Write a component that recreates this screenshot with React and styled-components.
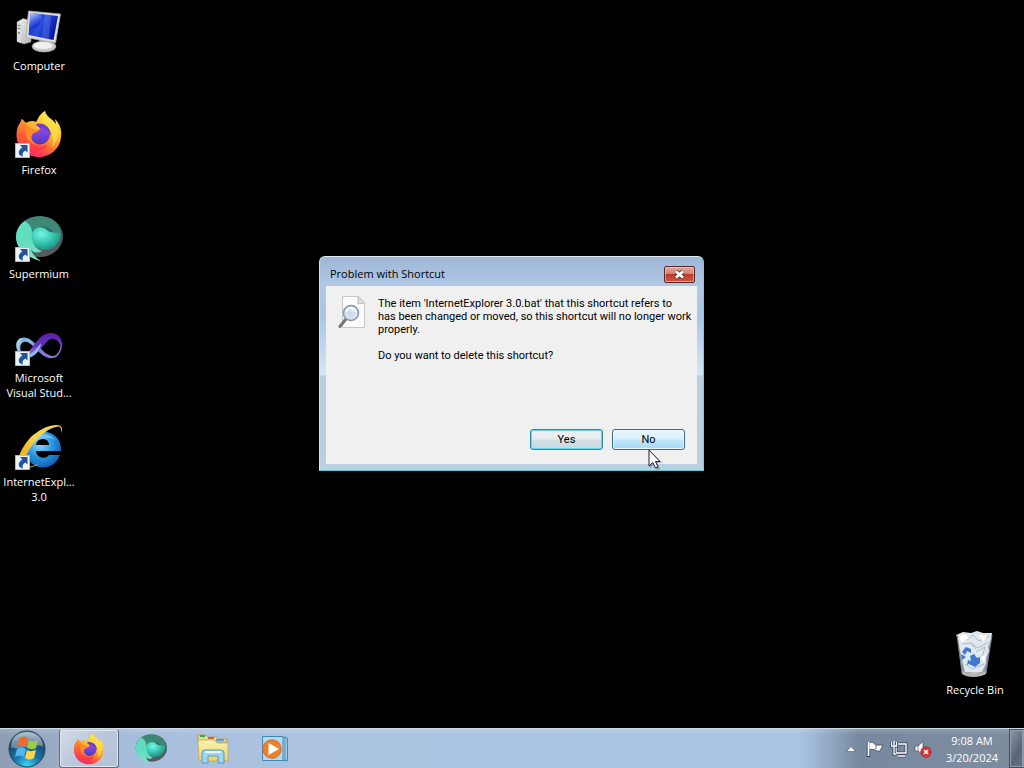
import React from 'react';
import styled, { createGlobalStyle } from 'styled-components';

const GlobalStyle = createGlobalStyle`
  * { box-sizing: border-box; }
  body { margin: 0; background: #000; font-family: "Open Sans", "Noto Sans", sans-serif; font-size: 11px; }
  button { font: inherit; padding: 0; cursor: default; }
  svg { display: block; flex: none; }
`;

const Screen = styled.div`
  min-height: 100vh;
  display: flex;
  flex-direction: column;
  background: #000;
`;

const Desktop = styled.main`
  position: relative;
  flex: 1;
  display: flex;
  justify-content: space-between;
`;

const IconColumn = styled.nav`
  display: flex;
  flex-direction: column;
  justify-content: ${(p) => (p.$end ? 'flex-end' : 'flex-start')};
  padding: ${(p) => (p.$end ? '0 10px 22px 0' : '0')};
`;

const Shortcut = styled.button`
  width: 78px;
  height: ${(p) => (p.$short ? '82px' : '104px')};
  padding-top: 6px;
  display: flex;
  flex-direction: column;
  align-items: center;
  gap: 4px;
  border: 0;
  background: none;
  color: #fff;
  line-height: 15px;
  text-align: center;
  text-shadow: 0 1px 2px #000;
`;

const IconBox = styled.span`
  position: relative;
  display: block;
  width: 48px;
  height: 48px;
`;

const Badge = styled.span`
  position: absolute;
  left: 0;
  bottom: 0;
`;

const Label = styled.span`
  white-space: pre-line;
`;

const DialogLayer = styled.div`
  position: absolute;
  inset: 0 1px 1px 0;
  display: flex;
  align-items: center;
  justify-content: center;
  pointer-events: none;
`;

const Dialog = styled.section`
  pointer-events: auto;
  width: 385px;
  display: flex;
  flex-direction: column;
  padding: 0 6px 6px;
  border: 1px solid;
  border-color: #dfe9f4 #66d3ee #52cbe3 #cfe4f2;
  border-radius: 6px 6px 0 0;
  background: linear-gradient(#9fb6d8 0, #b0c8e4 28px, #a9c6e6 60px, #d3e6f4 118px, #b5cee3 119px, #b9d0e0 100%);
  color: #000;
`;

const TitleBar = styled.header`
  height: 29px;
  display: flex;
  align-items: center;
  justify-content: space-between;
  padding: 5px 2px 0 4px;
`;

const Title = styled.h1`
  margin: 0;
  font-size: 11px;
  font-weight: 400;
  line-height: 16px;
`;

const CloseButton = styled.button`
  width: 31px;
  height: 17px;
  display: flex;
  align-items: center;
  justify-content: center;
  border: 1px solid #59242a;
  border-radius: 2px;
  background: linear-gradient(#e3a699 0, #d58275 45%, #bd3a2c 50%, #cc5846 100%);
  box-shadow: inset 0 0 0 1px rgba(255, 215, 205, 0.5);
`;

const DialogBody = styled.div`
  min-height: 178px;
  display: flex;
  flex-direction: column;
  justify-content: space-between;
  padding: 9px 12px 14px;
  background: #f0f0f0;
  font-family: Roboto, "Liberation Sans", sans-serif;
  font-size: 11px;
  line-height: 13px;
`;

const Message = styled.div`
  display: flex;
  gap: 12px;
`;

const MessageText = styled.div`
  padding-top: 2px;
  p { margin: 0 0 13px; white-space: pre; }
`;

const Actions = styled.div`
  display: flex;
  justify-content: flex-end;
  gap: 9px;
`;

const ActionButton = styled.button`
  width: 73px;
  height: 21px;
  border: 1px solid ${(p) => (p.$hot ? '#3c6f8f' : '#2b8aa4')};
  border-radius: 3px;
  color: #000;
  background: ${(p) =>
    p.$hot
      ? 'linear-gradient(#eaf6fd 0, #d9f0fc 48%, #bee6fd 52%, #a7d9f5 100%)'
      : 'linear-gradient(#f0f2f3 0, #e6ebee 48%, #d5dfe5 52%, #c8dae2 100%)'};
  box-shadow: inset 0 0 0 1px ${(p) => (p.$hot ? '#e4f5fc' : '#62d7ef')};
`;

const Pointer = styled.span`
  position: absolute;
  left: calc(50% + 136px);
  top: calc(50% + 85px);
`;

const Taskbar = styled.footer`
  height: 40px;
  display: flex;
  align-items: stretch;
  border-top: 1px solid #ccd9e8;
  background:
    linear-gradient(rgba(255, 255, 255, 0.16), rgba(255, 255, 255, 0) 6px),
    linear-gradient(90deg, #8e9db3 0, #9cadc6 60px, #a7bddb 130px, #abc3e1 300px, #a9c3e4 calc(100% - 224px), #92a9c6 calc(100% - 195px), #78899f calc(100% - 165px), #7e8c9f 100%);
`;

const StartButton = styled.button`
  width: 54px;
  margin-right: 5px;
  border: 0;
  background: none;
  display: flex;
  align-items: center;
  justify-content: center;
`;

const TaskList = styled.nav`
  display: flex;
  gap: 2px;
  flex: 1;
`;

const TaskButton = styled.button`
  width: 60px;
  display: flex;
  align-items: center;
  justify-content: center;
  border: 1px solid ${(p) => (p.$open ? '#5d6c80' : 'transparent')};
  border-top-color: transparent;
  border-radius: 3px;
  background: ${(p) => (p.$open ? 'linear-gradient(135deg, #d3dbe7, #bac7db 50%, #b5c3d9)' : 'none')};
  box-shadow: ${(p) => (p.$open ? 'inset 0 0 0 1px #dfe6f0' : 'none')};
`;

const Tray = styled.div`
  display: flex;
  align-items: center;
`;

const TrayButton = styled.button`
  width: 24px;
  height: 24px;
  display: flex;
  align-items: center;
  justify-content: center;
  border: 0;
  background: none;
`;

const Clock = styled.time`
  width: 74px;
  color: #fff;
  text-align: center;
  line-height: 17px;
  white-space: pre-line;
`;

const ShowDesktop = styled.button`
  width: 15px;
  align-self: stretch;
  border: 1px solid #414c5a;
  border-right-color: #8b97a6;
  background: linear-gradient(120deg, #8c98a8, #5b6675 60%, #667283);
  box-shadow: inset 0 0 0 1px #919eaf;
`;

const Svg = ({ size = 48, box = 48, children }) => (
  <svg width={size} height={size} viewBox={`0 0 ${box} ${box}`} aria-hidden="true">{children}</svg>
);

const Gradient = ({ id, stops, x2 = 0, y2 = 1 }) => (
  <linearGradient id={id} x1="0" y1="0" x2={x2} y2={y2}>
    {stops.map((c, i) => <stop key={i} offset={i / (stops.length - 1)} stopColor={c} />)}
  </linearGradient>
);

const ComputerIcon = () => (
  <Svg>
    <defs>
      <Gradient id="pcScreen" stops={['#0a1cb4', '#2b4ee0', '#0616a0']} x2={1} y2={0.5} />
      <Gradient id="pcCase" stops={['#f2f2f2', '#b4b4b4']} x2={1} />
      <Gradient id="pcShine" stops={['#f4f8ff', '#5b7cf0', '#0a1cb4']} x2={0.5} />
    </defs>
    <g transform="translate(0 2)">
      <path d="M2 14 L8 10.500 L16 12.500 V34 L9 36 L2 33.500Z" fill="url(#pcCase)" stroke="#8c8c8c" strokeWidth=".5" />
      <path d="M2 14 L6 14.500 V35 L2 33.500Z" fill="#dcdcdc" />
      <path d="M2.500 17 L5.500 18 M2.500 20 L5.500 21" stroke="#777" />
      <circle cx="4" cy="25" r="1" fill="#777" />
      <path d="M24 30 L32 32 L31 38 H25Z" fill="#b5b5b5" />
      <ellipse cx="29" cy="38.500" rx="12" ry="5.500" fill="#c9c9c9" stroke="#979797" strokeWidth=".6" />
      <ellipse cx="28" cy="37.500" rx="9.500" ry="3.600" fill="#f0f0f0" />
      <path d="M13.500 3 L45.500 6 L40.500 35 L11 29.500Z" fill="#dededb" stroke="#a9a9a3" strokeWidth=".8" />
      <path d="M15.500 5 L43 8 L38.500 32 L13.500 27Z" fill="url(#pcScreen)" />
      <path d="M15.500 5 L26 6 C28 14 24 20 14.500 20Z" fill="url(#pcShine)" opacity=".85" />
      <path d="M30 7 L36 7.500 L34 31 L27 29.500Z" fill="#6f8ef8" opacity=".35" />
    </g>
  </Svg>
);

const FirefoxIcon = ({ size, id }) => (
  <Svg size={size}>
    <defs>
      <linearGradient id={`${id}a`} x1=".8" y1=".05" x2=".3" y2="1">
        <stop offset="0" stopColor="#fff04a" />
        <stop offset=".35" stopColor="#ffc02e" />
        <stop offset=".62" stopColor="#ff7a32" />
        <stop offset=".85" stopColor="#fb3a55" />
        <stop offset="1" stopColor="#e82d7c" />
      </linearGradient>
      <Gradient id={`${id}b`} stops={['#9a4de8', '#7744d8', '#5238b5']} />
      <Gradient id={`${id}c`} stops={['#ff9a2c', '#ff5c36', '#ff3350']} />
    </defs>
    <path d="M30 1 C31 7 38 9 41 14 C41 12 40 11 40 9 C45 14 47 20 46 27 C45 39 35 47 24 47 C11 47 1.500 37 1.500 25 C1.500 19 3 15 6 12 L7 9 L11 13 C14 11 18 10 21 12 C23 10 23 5 30 1Z" fill={`url(#${id}a)`} />
    <path d="M4 15 L7 9 L12 15 C16 14 22 16 23 19 C18 21 14 24 15 29 C17 37 27 38 32 34 C30 43 15 44 7 36 C1 30 1 20 4 15Z" fill={`url(#${id}c)`} />
    <circle cx="25" cy="24.500" r="10" fill={`url(#${id}b)`} />
    <path d="M9 15 C15 13 20 17 25 18 C25 21 22 22 19 23 C15 25 16 31 20 34 C14 33 10 28 11 22Z" fill="#ff8b28" />
    <path d="M10 12 L16 18 L23 20 L25 18 C21 15 18 14 14 14Z" fill="#ffb632" />
    <path d="M21 14 C27 12 36 16 36 26 C34 21 30 18 25 18Z" fill="#6c3ed0" />
    <path d="M30 1 C31 8 39 11 42 17 C45 23 42 33 37 37 C39 29 37 20 31 15 C26 12 25 6 30 1Z" fill="#ffe14b" opacity=".7" />
  </Svg>
);

const SupermiumIcon = ({ size, id }) => (
  <Svg size={size}>
    <defs>
      <Gradient id={`${id}a`} stops={['#5fe0bd', '#62dcbf', '#7ee6cb']} />
      <radialGradient id={`${id}b`} cx=".35" cy=".3" r=".75">
        <stop offset="0" stopColor="#7df2e6" />
        <stop offset=".45" stopColor="#3ccdb8" />
        <stop offset="1" stopColor="#1d8878" />
      </radialGradient>
      <Gradient id={`${id}c`} stops={['#3f8d7c', '#2e695f', '#565c5a']} x2={0.5} />
    </defs>
    <ellipse cx="24.500" cy="22.500" rx="23.500" ry="20.500" fill={`url(#${id}c)`} />
    <path d="M11 7 C19 1 35 0 43 11 C45 14 46 17 46 20 C40 21 38 16 33 14 C27 11 20 13 17 18Z" fill="#3f8878" />
    <path d="M17 19 C20 12 28 12 32 16 C36 20 41 17 46 20 C45 31 37 37 28 36 C20 35 14 27 17 19Z" fill={`url(#${id}b)`} />
    <path d="M10 7 C15 10 17 14 17 19 C16 27 19 34 27 37 C21 40 17 38 16 35 C17 40 20 43 26 47 C10 43 1 34 1 23 C1 16 5 10 10 7Z" fill={`url(#${id}a)`} />
  </Svg>
);

const VisualStudioIcon = () => (
  <Svg>
    <defs>
      <Gradient id="vsA" stops={['#cfe9f7', '#7fb0de', '#86bdea', '#5b8fd0']} x2={1} y2={0.2} />
      <Gradient id="vsB" stops={['#5a1fa8', '#6a2fc0', '#a08be0']} />
    </defs>
    <g transform="translate(0 11)">
      <path d="M22 17 C16 9 8 6 3 11 C-1 16 2 25 9 27 C4 22 4 14 9 13 C14 12 18 17 22 22Z" fill="url(#vsA)" />
      <path d="M25 18 C29 24 36 29 41 26 C46 22 47 14 44 8 C50 14 46 28 38 29 C31 30 26 25 22 21Z" fill="#8a78d4" />
      <path d="M7 26 C17 26 21 5 35 4 C43 3 48 10 46 18 C44 12 40 9 36 10 C29 12 22 31 8 28Z" fill="url(#vsB)" />
      <path d="M7 27 C16 28 21 20 26 14 C26 21 18 31 9 29Z" fill="#86c0ec" />
    </g>
  </Svg>
);

const ExplorerIcon = () => (
  <Svg>
    <defs>
      <radialGradient id="ieA" cx=".4" cy=".35" r=".75">
        <stop offset="0" stopColor="#8bdcfb" />
        <stop offset=".5" stopColor="#2593df" />
        <stop offset="1" stopColor="#0b51a5" />
      </radialGradient>
      <Gradient id="ieB" stops={['#f9d44a', '#f0b420', '#fff2a0', '#d99a18']} x2={-1} />
    </defs>
    <g transform="translate(0 2)">
      <path d="M46 27 H21 C21 34 31 36 34 31 H45 C41 42 29 47 19 41 C9 35 8 18 18 11 C31 3 47 11 46 27Z M21 21 H34 C34 13 22 13 21 21Z" fill="url(#ieA)" fillRule="evenodd" />
      <path d="M18 13 C25 7 36 9 40 16 C32 12 23 13 18 20Z" fill="#b4eaff" opacity=".4" />
      <path d="M46.500 9 C48 4 47 1 41 1 C28 1 8 15 3 36 L10 36 C14 20 31 4 43 2.500 C46 2.500 46.500 5 46.500 9Z" fill="url(#ieB)" />
      <path d="M15 43 C18 43 21 41 23 40" stroke="#d8a52c" fill="none" />
    </g>
  </Svg>
);

const BinIcon = () => (
  <Svg>
    <defs><Gradient id="binA" stops={['#dfe9ef', '#98aab5', '#d3dce1', '#8d9ba3']} x2={1} y2={0.2} /></defs>
    <path d="M6 5 L11 43 C16 47 31 47 35 43 L41 5Z" fill="url(#binA)" opacity=".9" />
    <path d="M5 5 L12 2 L20 3 L26 1 L32 3 L41 3 L40 10 L37 17 L38 21 L35 28 L35 33 L31 42 H14 L10 25 L7 9Z" fill="#dfe8ee" />
    <path d="M6 7 L16 10 L22 5 L28 11 L39 6 M11 14 L20 13 L27 18 L38 12 M25 22 L34 17 L31 27 M14 34 L21 39 L33 34 M25 19 L20 13" fill="none" stroke="#a9bcc8" strokeWidth="1" />
    <path d="M8 7 L14 4 L18 8 L11 13Z M28 5 L36 6 L32 12Z M30 27 L34 25 L33 32Z M17 29 L20 30" fill="#fff" />
    <path d="M11 22 L15 17 L20 19 L20 23 L16 21 L14 25Z M10 24 L15 27 L11 30Z M19 26 L23 24 L26 28 L29 27 L29 33 L24 37 L18 34 L16 35 L17 30 L20 31Z" fill="#3f78d0" />
    <path d="M6 5 L11 43 M41 5 L35 43" stroke="#738089" strokeWidth="1" />
    <path d="M11 41 C17 45 29 45 35 41 V44 C28 48 17 48 11 44Z" fill="#b8b7ad" />
  </Svg>
);

const ShortcutBadge = () => (
  <svg width="15" height="15" viewBox="0 0 15 15" aria-hidden="true">
    <path d="M.500 .500H14.500V14.500H.500Z" fill="#edf2f7" stroke="#b4bdc6" />
    <path d="M5 2 H12.500 V9.500 L10.300 7.500 C7.500 9 7 11 8 13.500 C3 12.500 2 8 7.300 4.500Z" fill="#1f549c" />
  </svg>
);

const SearchPageIcon = () => (
  <svg width="28" height="36" viewBox="0 0 28 36" aria-hidden="true">
    <path d="M4.500 1.500 H20 L26.500 8 V32.500 H4.500Z" fill="#fbfbfb" stroke="#c8c8c8" />
    <path d="M20 1.500 L26.500 8 L20 9Z" fill="#dedede" stroke="#bdbdbd" />
    <path d="M8 24 L2 31.500" stroke="#777" strokeWidth="3" strokeLinecap="round" />
    <circle cx="13" cy="18" r="7.500" fill="#d5e6f3" stroke="#8e969e" strokeWidth="1.600" />
    <path d="M8 17 C10 12 16 12 18 17" fill="none" stroke="#f3faff" strokeWidth="2" />
    <path d="M9 18 H17 M10 21 H16 M12 14 V23" stroke="#b7cfe0" strokeWidth=".6" />
  </svg>
);

const CloseGlyph = () => (
  <svg width="13" height="11" viewBox="0 0 13 11" aria-hidden="true">
    <path d="M3 2.500 L10 8.500 M10 2.500 L3 8.500" stroke="#4c4650" strokeWidth="4.400" />
    <path d="M3 2.500 L10 8.500 M10 2.500 L3 8.500" stroke="#fff" strokeWidth="2.600" />
  </svg>
);

const PointerIcon = () => (
  <svg width="15" height="22" viewBox="0 0 15 22" aria-hidden="true">
    <path d="M2 2 V19 L6 15.500 L9 21 L12 20 L9.500 14 H14.500Z" fill="#000" opacity=".25" />
    <path d="M1 1 V17 L4.800 13.500 L7.500 19 L10 18 L7.500 12.500 H12Z" fill="#fff" stroke="#16213a" strokeWidth="1" />
  </svg>
);

const StartIcon = () => (
  <Svg size={38} box={38}>
    <defs>
      <radialGradient id="orb" cx=".5" cy=".95" r=".9">
        <stop offset="0" stopColor="#39d3f5" />
        <stop offset=".4" stopColor="#1773ac" />
        <stop offset=".8" stopColor="#1c466b" />
        <stop offset="1" stopColor="#53718b" />
      </radialGradient>
      <Gradient id="orbShine" stops={['#e6eff5', '#81a1b7']} />
    </defs>
    <circle cx="19" cy="19" r="18" fill="url(#orb)" stroke="#29445d" />
    <path d="M3 17 C3 7 11 2 19 2 S35 7 35 17 C27 12 11 22 3 17Z" fill="url(#orbShine)" opacity=".65" />
    <path d="M12 8 C15 6 18 6 20 8 L18 17 C15 15 12 16 9 17Z" fill="#f06a28" />
    <path d="M21 10 C24 12 27 11 30 10 L28 18 C25 20 22 19 19 18Z" fill="#9dcc43" />
    <path d="M9 19 C12 17 15 17 18 19 L16 27 C13 25 10 26 7 27Z" fill="#56b5ef" />
    <path d="M19 20 C22 22 25 21 28 20 L26 28 C23 30 20 30 17 28Z" fill="#ffd44c" />
  </Svg>
);

const FolderIcon = () => (
  <Svg size={34} box={34}>
    <defs><Gradient id="fold" stops={['#fcf4ae', '#e9cf68']} /></defs>
    <path d="M2 5 V3 H10 L12 5 H20 L22 7 H31 V10 H2Z" fill="#edd682" stroke="#bb9943" strokeWidth=".8" />
    <path d="M4 3 H9 V5 H4Z" fill="#37a852" />
    <path d="M12 5 H18 V7 H12Z" fill="#c86545" />
    <path d="M20 7 H28 V9 H20Z" fill="#5f9ed7" />
    <path d="M2 8 H18 L21 11 H32 V29 H3Z" fill="url(#fold)" stroke="#c6a856" strokeWidth=".8" />
    <path d="M6 31 V21 Q6 18 9 18 H25 Q28 18 28 21 V31 H22 V24 H12 V31Z" fill="#9fd6f3" stroke="#4b94c3" strokeWidth=".9" />
    <path d="M9 20 H25" stroke="#e4f8ff" strokeWidth="2" />
  </Svg>
);

const MediaIcon = () => (
  <Svg size={28} box={28}>
    <path d="M20 1.500 L26.500 3 V26 L20 25Z" fill="#9fcbe7" stroke="#2f7ba5" strokeWidth=".8" />
    <path d="M24 2.500 V25.500" stroke="#2f7ba5" strokeWidth=".7" />
    <path d="M1.500 1.500 H22 V25.500 H1.500Z" fill="#b7d7ee" stroke="#4286b4" />
    <circle cx="11" cy="14" r="9.200" fill="#ee812c" stroke="#d6681d" />
    <path d="M7.500 8 L18 14 L7.500 20Z" fill="#fff" />
  </Svg>
);

const ArrowGlyph = () => (
  <svg width="10" height="6" viewBox="0 0 10 6" aria-hidden="true"><path d="M5 .500 L9.500 5.500 H.500Z" fill="#fff" stroke="#4d596b" strokeWidth=".6" /></svg>
);

const FlagGlyph = () => (
  <Svg size={18} box={18}>
    <path d="M2.500 2 V17" stroke="#35445c" strokeWidth="3.500" />
    <path d="M3 3 C7 1 8 4 10 5 L17 5 L14 11 C10 12 9 8 3 10Z" fill="#fff" stroke="#48566d" strokeWidth="1" />
    <path d="M2.500 2 V16" stroke="#fff" strokeWidth="1.800" />
    <path d="M10 4 V9" stroke="#65748b" />
  </Svg>
);

const NetworkGlyph = () => (
  <Svg size={18} box={18}>
    <path d="M6 4 H16 V13 H6Z M8 16 H15" fill="#7688a0" stroke="#35445c" strokeWidth="3" />
    <path d="M6 4 H16 V13 H6Z M8 16 H15" fill="none" stroke="#fff" strokeWidth="1.400" />
    <path d="M1.500 2 V6 H6.500 V2 M4 6 V14 H6" fill="none" stroke="#35445c" strokeWidth="3" />
    <path d="M1.500 2 V6 H6.500 V2 M4 6 V14 H6 M4 1 V5" fill="none" stroke="#fff" strokeWidth="1.300" />
  </Svg>
);

const VolumeGlyph = () => (
  <Svg size={18} box={18}>
    <path d="M1 6 H4 L9 1.500 V15 L4 11 H1Z" fill="#fff" stroke="#4b5870" strokeWidth=".8" />
    <path d="M4 6 V11" stroke="#75859b" />
    <circle cx="12" cy="12" r="5.300" fill="#d9363b" stroke="#a5232c" strokeWidth=".7" />
    <path d="M10 10 L14 14 M14 10 L10 14" stroke="#fff" strokeWidth="1.500" />
  </Svg>
);

const shortcuts = [
  { label: 'Computer', icon: <ComputerIcon /> },
  { label: 'Firefox', icon: <FirefoxIcon id="ffDesk" />, link: true },
  { label: 'Supermium', icon: <SupermiumIcon id="smDesk" />, link: true },
  { label: 'Microsoft\nVisual Stud...', icon: <VisualStudioIcon />, link: true },
  { label: 'InternetExpl...\n3.0', icon: <ExplorerIcon />, link: true },
];

const tasks = [
  { name: 'Firefox', icon: <FirefoxIcon size={32} id="ffTask" />, open: true },
  { name: 'Supermium', icon: <SupermiumIcon size={32} id="smTask" /> },
  { name: 'Windows Explorer', icon: <FolderIcon /> },
  { name: 'Windows Media Player', icon: <MediaIcon /> },
];

const tray = [
  { name: 'Show hidden icons', icon: <ArrowGlyph /> },
  { name: 'Action Center', icon: <FlagGlyph /> },
  { name: 'Network', icon: <NetworkGlyph /> },
  { name: 'Volume', icon: <VolumeGlyph /> },
];

export default function App() {
  return (
    <Screen>
      <GlobalStyle />
      <Desktop>
        <IconColumn>
          {shortcuts.map((s) => (
            <Shortcut key={s.label}>
              <IconBox>{s.icon}{s.link && <Badge><ShortcutBadge /></Badge>}</IconBox>
              <Label>{s.label}</Label>
            </Shortcut>
          ))}
        </IconColumn>
        <IconColumn $end>
          <Shortcut $short><IconBox><BinIcon /></IconBox><Label>Recycle Bin</Label></Shortcut>
        </IconColumn>
        <DialogLayer>
          <Dialog role="dialog" aria-labelledby="dialog-title">
            <TitleBar>
              <Title id="dialog-title">Problem with Shortcut</Title>
              <CloseButton aria-label="Close"><CloseGlyph /></CloseButton>
            </TitleBar>
            <DialogBody>
              <Message>
                <SearchPageIcon />
                <MessageText>
                  <p>{"The item 'InternetExplorer 3.0.bat' that this shortcut refers to\nhas been changed or moved, so this shortcut will no longer work\nproperly."}</p>
                  <p>Do you want to delete this shortcut?</p>
                </MessageText>
              </Message>
              <Actions>
                <ActionButton>Yes</ActionButton>
                <ActionButton $hot>No</ActionButton>
              </Actions>
            </DialogBody>
          </Dialog>
          <Pointer><PointerIcon /></Pointer>
        </DialogLayer>
      </Desktop>
      <Taskbar>
        <StartButton aria-label="Start"><StartIcon /></StartButton>
        <TaskList>
          {tasks.map((t) => <TaskButton key={t.name} aria-label={t.name} $open={t.open}>{t.icon}</TaskButton>)}
        </TaskList>
        <Tray>
          {tray.map((t) => <TrayButton key={t.name} aria-label={t.name}>{t.icon}</TrayButton>)}
          <Clock dateTime="2024-03-20T09:08">{'9:08 AM\n3/20/2024'}</Clock>
          <ShowDesktop aria-label="Show desktop" />
        </Tray>
      </Taskbar>
    </Screen>
  );
}
